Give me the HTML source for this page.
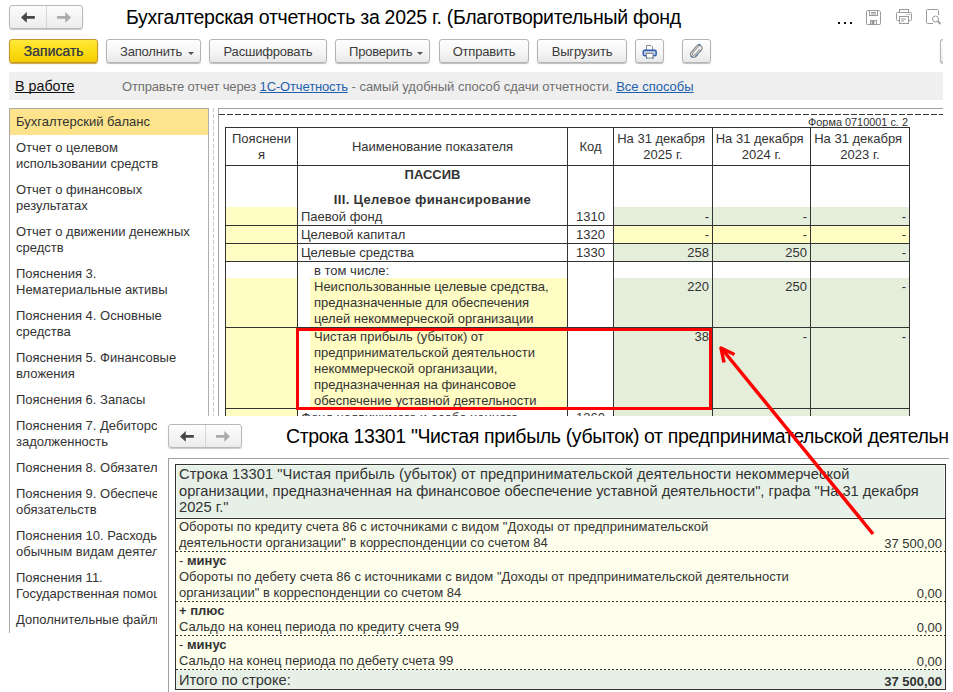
<!DOCTYPE html>
<html><head><meta charset="utf-8">
<style>
*{box-sizing:border-box;margin:0;padding:0}
html,body{width:953px;height:692px;overflow:hidden;background:#fff}
body{position:relative;font-family:"Liberation Sans",sans-serif;font-size:13px;color:#333}
.a{position:absolute}
span,div{text-decoration-skip-ink:none}
.nav{position:absolute;border:1px solid #b8b8b8;border-radius:3px;background:linear-gradient(#fdfdfd,#ececec);box-shadow:0 1px 1px #c8c8c8}
.nav .d{position:absolute;left:36px;top:0;bottom:0;width:1px;background:#d6d6d6}
.btn{position:absolute;top:39px;height:24px;border:1px solid #b5b5b5;border-radius:3px;background:linear-gradient(#ffffff 0%,#f4f4f4 60%,#e8e8e8 100%);box-shadow:0 1px 1px #bdbdbd;text-align:center;line-height:23px;font-size:13px;letter-spacing:-0.2px;color:#3a3a3a;white-space:nowrap}
.btn .car{position:absolute;right:6px;top:12px;width:0;height:0;border-left:3px solid transparent;border-right:3px solid transparent;border-top:3px solid #555}
.btn.dd{text-align:left;padding-left:13px}
.side{position:absolute;left:9px;top:108px;width:200px;height:525px;border:1px solid #a9a9a9;border-bottom:none;border-right-color:#b0b0b0;overflow:hidden}
.si{padding:5px 0 5px 6px;line-height:16px;font-size:13px;color:#333;white-space:nowrap}
.si.sel{background:#fde38c}
.t,.tc,.tr{font-size:13px;line-height:16px;color:#333;white-space:nowrap}
.dash{left:176px;width:769px;height:1px;background:repeating-linear-gradient(90deg,#333 0,#333 2px,transparent 2px,transparent 4px)}
.tc{text-align:center}.tr{text-align:right}.b{font-weight:bold}
</style></head><body>
<!-- top nav -->
<div class="nav" style="left:9px;top:5px;width:74px;height:24px">
  <div class="d"></div>
  <svg class="a" style="left:10px;top:6px" width="16" height="12" viewBox="0 0 16 12"><path d="M1 5.4 L6.8 0 V4 H14.8 V6.8 H6.8 V10.8 Z" fill="#474747"/></svg>
  <svg class="a" style="left:47px;top:6px" width="16" height="12" viewBox="0 0 16 12"><path d="M14 5.4 L8.3 0 V4 H0 V6.8 H8.3 V10.8 Z" fill="#ababab"/></svg>
</div>
<div class="a" style="left:126px;top:6px;font-size:19.5px;letter-spacing:-0.28px;color:#000;white-space:nowrap;line-height:22px">Бухгалтерская отчетность за 2025 г. (Благотворительный фонд</div>
<div class="a" style="left:838px;top:22px;width:2px;height:2px;background:#111"></div>
<div class="a" style="left:844px;top:22px;width:2px;height:2px;background:#111"></div>
<div class="a" style="left:850px;top:22px;width:2px;height:2px;background:#111"></div>
<!-- save icon -->
<svg class="a" style="left:866px;top:10px" width="15" height="15" viewBox="0 0 15 15" fill="none" stroke="#9a9a9a" stroke-width="1">
  <path d="M1.5 0.5 H13 L14.5 2 V13.5 Q14.5 14.5 13.5 14.5 H1.5 Q0.5 14.5 0.5 13.5 V1.5 Q0.5 0.5 1.5 0.5 Z"/>
  <rect x="3.5" y="0.5" width="8" height="5"/><path d="M5 2.5 H10 M5 4 H10"/>
  <rect x="4.5" y="10.5" width="6" height="4"/><rect x="6" y="11" width="2" height="3" fill="#9a9a9a"/>
</svg>
<!-- print icon -->
<svg class="a" style="left:896px;top:9px" width="17" height="16" viewBox="0 0 17 16" fill="none" stroke="#9a9a9a" stroke-width="1">
  <rect x="3.5" y="0.5" width="9" height="3"/>
  <path d="M3.5 11.5 H1.5 Q0.5 11.5 0.5 10.5 V4.5 Q0.5 3.5 1.5 3.5 H14.5 Q15.5 3.5 15.5 4.5 V10.5 Q15.5 11.5 14.5 11.5 H12.5"/>
  <rect x="3.5" y="7.5" width="9" height="7" fill="#fff"/><path d="M5 10 H10 M5 12 H8 M10.5 5.5 H11.5 M12.5 5.5 H14"/>
</svg>
<!-- preview icon -->
<svg class="a" style="left:926px;top:9px" width="16" height="16" viewBox="0 0 16 16" fill="none" stroke="#9a9a9a" stroke-width="1">
  <path d="M7 14.5 H1.5 Q0.5 14.5 0.5 13.5 V1.5 Q0.5 0.5 1.5 0.5 H11.5 Q12.5 0.5 12.5 1.5 V6"/>
  <circle cx="9.5" cy="10" r="3"/><path d="M11.7 12.2 L14.5 15" stroke-width="1.8"/>
</svg>

<!-- toolbar -->
<div class="btn" style="left:9px;width:89px;border-color:#c8922a;background:linear-gradient(#ffe83a,#fbdc14 55%,#f3cc00);box-shadow:0 1px 1px #c9a640;font-size:14px;letter-spacing:0;color:#363b48;text-shadow:0.5px 0 0 rgba(54,59,72,0.7)">Записать</div>
<div class="btn dd" style="left:106px;width:95px">Заполнить<span class="car"></span></div>
<div class="btn" style="left:209px;width:118px">Расшифровать</div>
<div class="btn dd" style="left:335px;width:95px">Проверить<span class="car"></span></div>
<div class="btn" style="left:439px;width:90px">Отправить</div>
<div class="btn" style="left:537px;width:90px">Выгрузить</div>
<div class="btn" style="left:635px;width:29px">
  <svg class="a" style="left:6px;top:4px" width="16" height="15" viewBox="0 0 16 15">
    <path d="M4.5 6.5 V1.5 H9 L10.5 3 V6.5" fill="#fff" stroke="#8a8a8a" stroke-width="1"/>
    <rect x="1.2" y="6.2" width="13" height="5.6" rx="1.6" fill="#b9c6da" stroke="#2b5cb2" stroke-width="1.4"/>
    <rect x="4.5" y="9.5" width="6.5" height="4.5" fill="#fff" stroke="#8a8a8a" stroke-width="1"/>
    <rect x="4" y="13.5" width="1.2" height="1" fill="#2b5cb2"/><rect x="10.3" y="13.5" width="1.2" height="1" fill="#2b5cb2"/>
  </svg>
</div>
<div class="btn" style="left:682px;width:29px">
  <svg class="a" style="left:6px;top:4px" width="16" height="16" viewBox="0 0 16 16">
    <g transform="translate(7.6 6.8) rotate(-48)">
      <rect x="-7.6" y="-3.1" width="14.2" height="6.2" rx="3.1" fill="none" stroke="#8e8e8e" stroke-width="1.3"/>
      <path d="M7.6 -1.5 H-4.2 Q-5.6 -1.5 -5.6 0 Q-5.6 1.4 -4.2 1.4 H3.5" fill="none" stroke="#9a9a9a" stroke-width="1.1"/>
      <path d="M-7.6 -1.2 V1.2 M-5 3.1 H-2 M5.5 -3.1 Q6.6 -2.5 6.6 -1" fill="none" stroke="#4d7aa8" stroke-width="1.3"/>
    </g>
  </svg>
</div>
<div class="btn" style="left:940px;width:6px;border-right:none;border-top-right-radius:0;border-bottom-right-radius:0"></div><div class="a" style="left:943px;top:30px;width:10px;height:40px;background:#fff"></div>

<!-- info bar -->
<div class="a" style="left:9px;top:72px;width:934px;height:28px;background:#efefef"></div>
<div class="a" style="left:15px;top:77px;font-size:14.3px;color:#111;text-decoration:underline;text-decoration-skip-ink:none;line-height:18px;white-space:nowrap">В работе</div>
<div class="a" style="left:122px;top:79px;font-size:13px;color:#707070;line-height:16px;white-space:nowrap"><span style="letter-spacing:-0.14px">Отправьте отчет через </span><span style="color:#1f5fae;text-decoration:underline;letter-spacing:-0.15px">1С-Отчетность</span> - самый удобный способ сдачи отчетности. <span style="color:#1f5fae;text-decoration:underline">Все способы</span></div>

<!-- sidebar -->
<div class="side">
  <div class="si sel">Бухгалтерский баланс</div>
  <div class="si">Отчет о целевом<br>использовании средств</div>
  <div class="si">Отчет о финансовых<br>результатах</div>
  <div class="si">Отчет о движении денежных<br>средств</div>
  <div class="si">Пояснения 3.<br>Нематериальные активы</div>
  <div class="si">Пояснения 4. Основные<br>средства</div>
  <div class="si">Пояснения 5. Финансовые<br>вложения</div>
  <div class="si">Пояснения 6. Запасы</div>
  <div class="si">Пояснения 7. Дебиторская<br>задолженность</div>
  <div class="si">Пояснения 8. Обязательства</div>
  <div class="si">Пояснения 9. Обеспечения<br>обязательств</div>
  <div class="si">Пояснения 10. Расходы по<br>обычным видам деятельности</div>
  <div class="si">Пояснения 11.<br>Государственная помощь</div>
  <div class="si">Дополнительные файлы</div>
</div>
<!-- splitter -->
<div class="a" style="left:213px;top:108px;width:1px;height:310px;background:repeating-linear-gradient(180deg,#c8c8c8 0,#c8c8c8 4px,transparent 4px,transparent 6px)"></div>

<!-- DOC -->
<div class="a" style="left:218px;top:108px;width:725px;height:310px;border-left:1px solid #a3a3a3;border-top:1px solid #a3a3a3"></div>
<div class="a" style="left:219px;top:114px;width:724px;height:1px;background:repeating-linear-gradient(90deg,#3a3a3a 0,#3a3a3a 6.5px,transparent 6.5px,transparent 8px)"></div>
<div class="a" style="left:808px;top:115.5px;font-size:10.9px;line-height:12px;color:#333;white-space:nowrap">Форма 0710001 с. 2</div>
<div id="tbl" class="a" style="left:0;top:0;width:953px;height:416px;overflow:hidden">
 <!-- fills -->
 <div class="a" style="left:226px;top:207px;width:71px;height:18px;background:#fffcc4"></div>
 <div class="a" style="left:226px;top:226px;width:71px;height:17px;background:#fffcc4"></div>
 <div class="a" style="left:226px;top:244px;width:71px;height:17px;background:#fffcc4"></div>
 <div class="a" style="left:226px;top:278px;width:71px;height:49px;background:#fffcc4"></div>
 <div class="a" style="left:226px;top:328px;width:71px;height:80px;background:#fffcc4"></div>
 <div class="a" style="left:226px;top:409px;width:71px;height:10px;background:#fffcc4"></div>
 <div class="a" style="left:310px;top:278px;width:257px;height:49px;background:#fffcc4"></div>
 <div class="a" style="left:310px;top:328px;width:257px;height:80px;background:#fffcc4"></div>
 <!-- data fills -->
 <div class="a" style="left:614px;top:207px;width:295px;height:18px;background:#e5eddb"></div>
 <div class="a" style="left:614px;top:226px;width:295px;height:17px;background:#fffcc4"></div>
 <div class="a" style="left:614px;top:244px;width:295px;height:17px;background:#e5eddb"></div>
 <div class="a" style="left:614px;top:278px;width:295px;height:49px;background:#e5eddb"></div>
 <div class="a" style="left:614px;top:328px;width:295px;height:80px;background:#e5eddb"></div>
 <div class="a" style="left:614px;top:409px;width:295px;height:10px;background:#e5eddb"></div>
 <!-- horizontal lines -->
 <div class="a" style="left:225px;top:127px;width:685px;height:1px;background:#333"></div>
 <div class="a" style="left:225px;top:165px;width:685px;height:1px;background:#333"></div>
 <div class="a" style="left:225px;top:225px;width:685px;height:1px;background:#333"></div>
 <div class="a" style="left:225px;top:243px;width:685px;height:1px;background:#333"></div>
 <div class="a" style="left:225px;top:261px;width:685px;height:1px;background:#333"></div>
 <div class="a" style="left:225px;top:327px;width:685px;height:1px;background:#333"></div>
 <div class="a" style="left:225px;top:408px;width:685px;height:1px;background:#333"></div>
 <!-- vertical lines -->
 <div class="a" style="left:225px;top:127px;width:1px;height:300px;background:#333"></div>
 <div class="a" style="left:297px;top:127px;width:1px;height:300px;background:#333"></div>
 <div class="a" style="left:567px;top:127px;width:1px;height:300px;background:#333"></div>
 <div class="a" style="left:613px;top:127px;width:1px;height:300px;background:#333"></div>
 <div class="a" style="left:712px;top:127px;width:1px;height:300px;background:#333"></div>
 <div class="a" style="left:810px;top:127px;width:1px;height:300px;background:#333"></div>
 <div class="a" style="left:909px;top:127px;width:1px;height:300px;background:#333"></div>
 <!-- header text -->
 <div class="a tc" style="left:226px;top:131px;width:71px">Пояснени<br>я</div>
 <div class="a tc" style="left:298px;top:139px;width:269px">Наименование показателя</div>
 <div class="a tc" style="left:568px;top:139px;width:45px">Код</div>
 <div class="a tc" style="left:614px;top:131px;width:98px">На 31 декабря&nbsp;<br>2025 г.</div>
 <div class="a tc" style="left:713px;top:131px;width:97px">На 31 декабря&nbsp;<br>2024 г.</div>
 <div class="a tc" style="left:811px;top:131px;width:98px">На 31 декабря&nbsp;<br>2023 г.</div>
 <!-- body text -->
 <div class="a tc b" style="left:298px;top:167px;width:269px">ПАССИВ</div>
 <div class="a tc b" style="left:298px;top:192px;width:269px;letter-spacing:0.33px">III. Целевое финансирование</div>
 <div class="a t" style="left:301px;top:209px">Паевой фонд</div>
 <div class="a t" style="left:301px;top:227px">Целевой капитал</div>
 <div class="a t" style="left:301px;top:245px">Целевые средства</div>
 <div class="a t" style="left:314px;top:263px">в том числе:<br>Неиспользованные целевые средства,<br>предназначенные для обеспечения<br>целей некоммерческой организации</div>
 <div class="a t" style="left:314px;top:329px">Чистая прибыль (убыток) от<br>предпринимательской деятельности<br>некоммерческой организации,<br>предназначенная на финансовое<br>обеспечение уставной деятельности</div>
 <div class="a t" style="left:301px;top:410px">Фонд недвижимого и особо ценного</div>
 <div class="a tc" style="left:568px;top:209px;width:45px">1310</div>
 <div class="a tc" style="left:568px;top:227px;width:45px">1320</div>
 <div class="a tc" style="left:568px;top:245px;width:45px">1330</div>
 <div class="a tc" style="left:568px;top:410px;width:45px">1360</div>
 <div class="a tr" style="left:614px;top:209px;width:95px">-</div>
 <div class="a tr" style="left:713px;top:209px;width:94px">-</div>
 <div class="a tr" style="left:811px;top:209px;width:95px">-</div>
 <div class="a tr" style="left:614px;top:227px;width:95px">-</div>
 <div class="a tr" style="left:713px;top:227px;width:94px">-</div>
 <div class="a tr" style="left:811px;top:227px;width:95px">-</div>
 <div class="a tr" style="left:614px;top:245px;width:95px">258</div>
 <div class="a tr" style="left:713px;top:245px;width:94px">250</div>
 <div class="a tr" style="left:811px;top:245px;width:95px">-</div>
 <div class="a tr" style="left:614px;top:279px;width:95px">220</div>
 <div class="a tr" style="left:713px;top:279px;width:94px">250</div>
 <div class="a tr" style="left:811px;top:279px;width:95px">-</div>
 <div class="a tr" style="left:614px;top:329px;width:95px">38</div>
 <div class="a tr" style="left:713px;top:329px;width:94px">-</div>
 <div class="a tr" style="left:811px;top:329px;width:95px">-</div>
</div>
<!-- red box -->
<div class="a" style="left:296px;top:328px;width:416px;height:82px;border:3px solid #f00"></div>


<!-- POPUP -->
<div class="a" style="left:157px;top:416px;width:796px;height:276px;background:#fff"></div>

<div class="nav" style="left:168px;top:424px;width:74px;height:24px">
  <div class="d"></div>
  <svg class="a" style="left:10px;top:6px" width="16" height="12" viewBox="0 0 16 12"><path d="M1 5.4 L6.8 0 V4 H14.8 V6.8 H6.8 V10.8 Z" fill="#474747"/></svg>
  <svg class="a" style="left:47px;top:6px" width="16" height="12" viewBox="0 0 16 12"><path d="M14 5.4 L8.3 0 V4 H0 V6.8 H8.3 V10.8 Z" fill="#ababab"/></svg>
</div>
<div class="a" style="left:286px;top:425px;width:662px;overflow:hidden;font-size:19.5px;letter-spacing:-0.36px;color:#000;white-space:nowrap;line-height:22px">Строка 13301 "Чистая прибыль (убыток) от предпринимательской деятельности некоммерческой организации</div>
<div class="a" style="left:168px;top:458px;width:781px;height:1px;background:#a0a0a0"></div>
<div class="a" style="left:168px;top:458px;width:1px;height:234px;background:#a0a0a0"></div>
<!-- inner table -->
<div class="a" style="left:175px;top:464px;width:771px;height:226px;border:1px solid #333;background:#fefeec"></div>
<div class="a" style="left:176px;top:465px;width:769px;height:53px;background:#e7f0e7;box-shadow:inset 1px 1px 0 #f0f8f0,inset -1px -1px 0 #f4faf4"></div>
<div class="a" style="left:176px;top:518px;width:769px;height:1px;background:#333"></div>
<div class="a" style="left:176px;top:670px;width:769px;height:19px;background:#e7f0e7"></div>
<div class="a dash" style="top:551px"></div>
<div class="a dash" style="top:601px"></div>
<div class="a dash" style="top:635px"></div>
<div class="a dash" style="top:669px"></div>
<div class="a" style="left:179px;top:466px;font-size:14.67px;line-height:16.6px;color:#333;white-space:nowrap"><span style="letter-spacing:0.07px">Строка 13301 "Чистая прибыль (убыток) от предпринимательской деятельности некоммерческой</span><br>организации, предназначенная на финансовое обеспечение уставной деятельности", графа "На 31 декабря<br>2025 г."</div>
<div class="a t" style="left:179px;top:519px">Обороты по кредиту счета 86 с источниками с видом "Доходы от предпринимательской<br>деятельности организации" в корреспонденции со счетом 84</div>
<div class="a t" style="left:179px;top:553px">- <b>минус</b></div>
<div class="a t" style="left:179px;top:569px">Обороты по дебету счета 86 с источниками с видом "Доходы от предпринимательской деятельности<br>организации" в корреспонденции со счетом 84</div>
<div class="a t" style="left:179px;top:603px"><b>+ плюс</b></div>
<div class="a t" style="left:179px;top:619px">Сальдо на конец периода по кредиту счета 99</div>
<div class="a t" style="left:179px;top:637px">- <b>минус</b></div>
<div class="a t" style="left:179px;top:653px">Сальдо на конец периода по дебету счета 99</div>
<div class="a tr" style="left:700px;top:536px;width:242px">37 500,00</div>
<div class="a tr" style="left:700px;top:586px;width:242px">0,00</div>
<div class="a tr" style="left:700px;top:620px;width:242px">0,00</div>
<div class="a tr" style="left:700px;top:654px;width:242px">0,00</div>
<div class="a" style="left:179px;top:672px;font-size:14.67px;line-height:16px;color:#333;white-space:nowrap">Итого по строке:</div>
<div class="a tr b" style="left:700px;top:674px;width:242px">37 500,00</div>
<!-- arrow -->
<svg class="a" style="left:0;top:0" width="953" height="692" viewBox="0 0 953 692">
  <path d="M873 534 L722 349" stroke="#f00" stroke-width="3.5" fill="none"/>
  <path d="M734.5 354.5 L721 348 L724 362.5" stroke="#f00" stroke-width="3.5" fill="none" stroke-linejoin="round" stroke-linecap="butt"/>
</svg>

</body></html>
